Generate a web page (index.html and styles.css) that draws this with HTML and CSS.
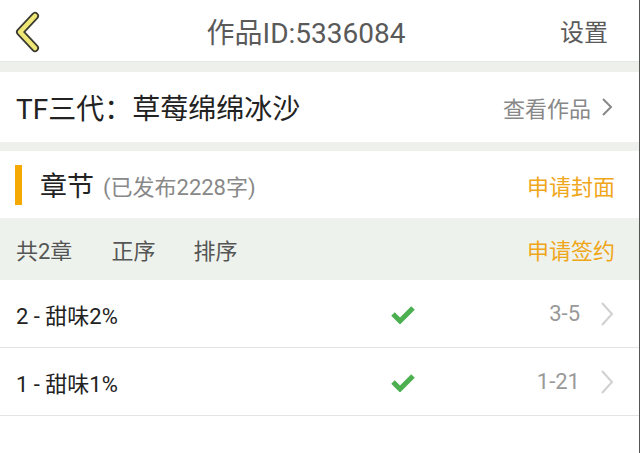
FILE: index.html
```html
<!DOCTYPE html>
<html lang="zh">
<head>
<meta charset="utf-8">
<link rel="stylesheet" href="styles.css">
</head>
<body>
<div class="app">
  <header class="topbar">
    <svg class="back" width="30" height="44" viewBox="0 0 30 44">
      <polyline points="23,6 8,22 23,38" fill="none" stroke="#3a3a30" stroke-width="8" stroke-linecap="round" stroke-linejoin="round"/>
      <polyline points="23,6 8,22 23,38" fill="none" stroke="#efe877" stroke-width="4.5" stroke-linecap="round" stroke-linejoin="round"/>
    </svg>
    <div class="top-title">作品ID:5336084</div>
    <div class="top-action">设置</div>
  </header>
  <div class="band"></div>
  <section class="work-row">
    <div class="work-title">TF三代：草莓绵绵冰沙</div>
    <div class="work-link">查看作品
      <svg width="12" height="20" viewBox="0 0 12 20"><polyline points="2,2 10,10 2,18" fill="none" stroke="#888" stroke-width="2"/></svg>
    </div>
  </section>
  <div class="band band-b"></div>
  <section class="chapter-head">
    <div class="ch-left">
      <span class="bar"></span>
      <span class="ch-title">章节</span>
      <span class="ch-count">(已发布2228字)</span>
    </div>
    <div class="orange">申请封面</div>
  </section>
  <section class="toolbar">
    <div class="tools">
      <span class="tool t1">共2章</span>
      <span class="tool t2">正序</span>
      <span class="tool">排序</span>
    </div>
    <div class="orange">申请签约</div>
  </section>
  <ul class="list">
    <li class="item">
      <span class="name">2 - 甜味2%</span>
      <svg class="check" width="26" height="20" viewBox="0 0 26 20"><polyline points="3,10 10,17 23,4" fill="none" stroke="#4caf50" stroke-width="5" stroke-linejoin="miter"/></svg>
      <span class="date">3-5</span>
      <svg class="chev" width="14" height="26" viewBox="0 0 14 26"><polyline points="2,2 12,13 2,24" fill="none" stroke="#d0d0d0" stroke-width="2"/></svg>
    </li>
    <li class="item">
      <span class="name">1 - 甜味1%</span>
      <svg class="check" width="26" height="20" viewBox="0 0 26 20"><polyline points="3,10 10,17 23,4" fill="none" stroke="#4caf50" stroke-width="5" stroke-linejoin="miter"/></svg>
      <span class="date">1-21</span>
      <svg class="chev" width="14" height="26" viewBox="0 0 14 26"><polyline points="2,2 12,13 2,24" fill="none" stroke="#d0d0d0" stroke-width="2"/></svg>
    </li>
  </ul>
</div>
</body>
</html>
```
FILE: styles.css
```css
* { box-sizing: border-box; }
html, body { margin: 0; padding: 0; background: #fff; }
body {
  font-family: Roboto, "Noto Sans CJK SC", sans-serif;
  width: 640px;
  height: 453px;
  overflow: hidden;
}
.app {
  width: 640px;
  height: 453px;
  border-right: 1px solid #555;
  background: #fff;
}
.topbar {
  height: 62px;
  display: flex;
  align-items: center;
  padding: 0 31px 0 12px;
  border-bottom: 1px solid #e6e8e2;
}
.back { display: block; margin-top: 2px; }
.top-title {
  flex: 1;
  text-align: center;
  font-size: 28px;
  color: #5a5a5a;
  padding-left: 10px;
}
.top-action { font-size: 24px; color: #5a5a5a; }
.band { height: 10px; background: #eef1eb; }
.band-b { height: 9px; }
.work-row {
  height: 70px;
  display: flex;
  align-items: center;
  justify-content: space-between;
  padding: 0 26px 0 16px;
}
.work-title { font-size: 28px; color: #222; }
.work-link {
  font-size: 22px;
  color: #888;
  display: flex;
  align-items: center;
  gap: 10px;
}
.chapter-head {
  height: 67px;
  display: flex;
  align-items: center;
  justify-content: space-between;
  padding: 0 24px 0 15px;
}
.ch-left { display: flex; align-items: center; }
.bar { width: 7px; height: 40px; background: #f5a800; margin-right: 18px; }
.ch-title { font-size: 27px; color: #222; margin-right: 9px; }
.ch-count { font-size: 22px; color: #888; }
.orange { font-size: 22px; color: #efa619; }
.toolbar {
  height: 62px;
  background: #eef2ec;
  display: flex;
  align-items: center;
  justify-content: space-between;
  padding: 0 24px 0 16px;
}
.tools { display: flex; align-items: center; }
.tool { font-size: 22px; color: #555; }
.t1 { margin-right: 39px; }
.t2 { margin-right: 38px; }
.list { list-style: none; margin: 0; padding: 0; }
.item {
  height: 68px;
  display: flex;
  align-items: center;
  padding: 0 25px 0 16px;
  border-bottom: 1px solid #e4e4e4;
}
.name { font-size: 22px; color: #222; width: 374px; }
.check { display: block; }
.date { flex: 1; text-align: right; font-size: 22px; color: #999; margin-right: 20px; }
.chev { display: block; }
```
